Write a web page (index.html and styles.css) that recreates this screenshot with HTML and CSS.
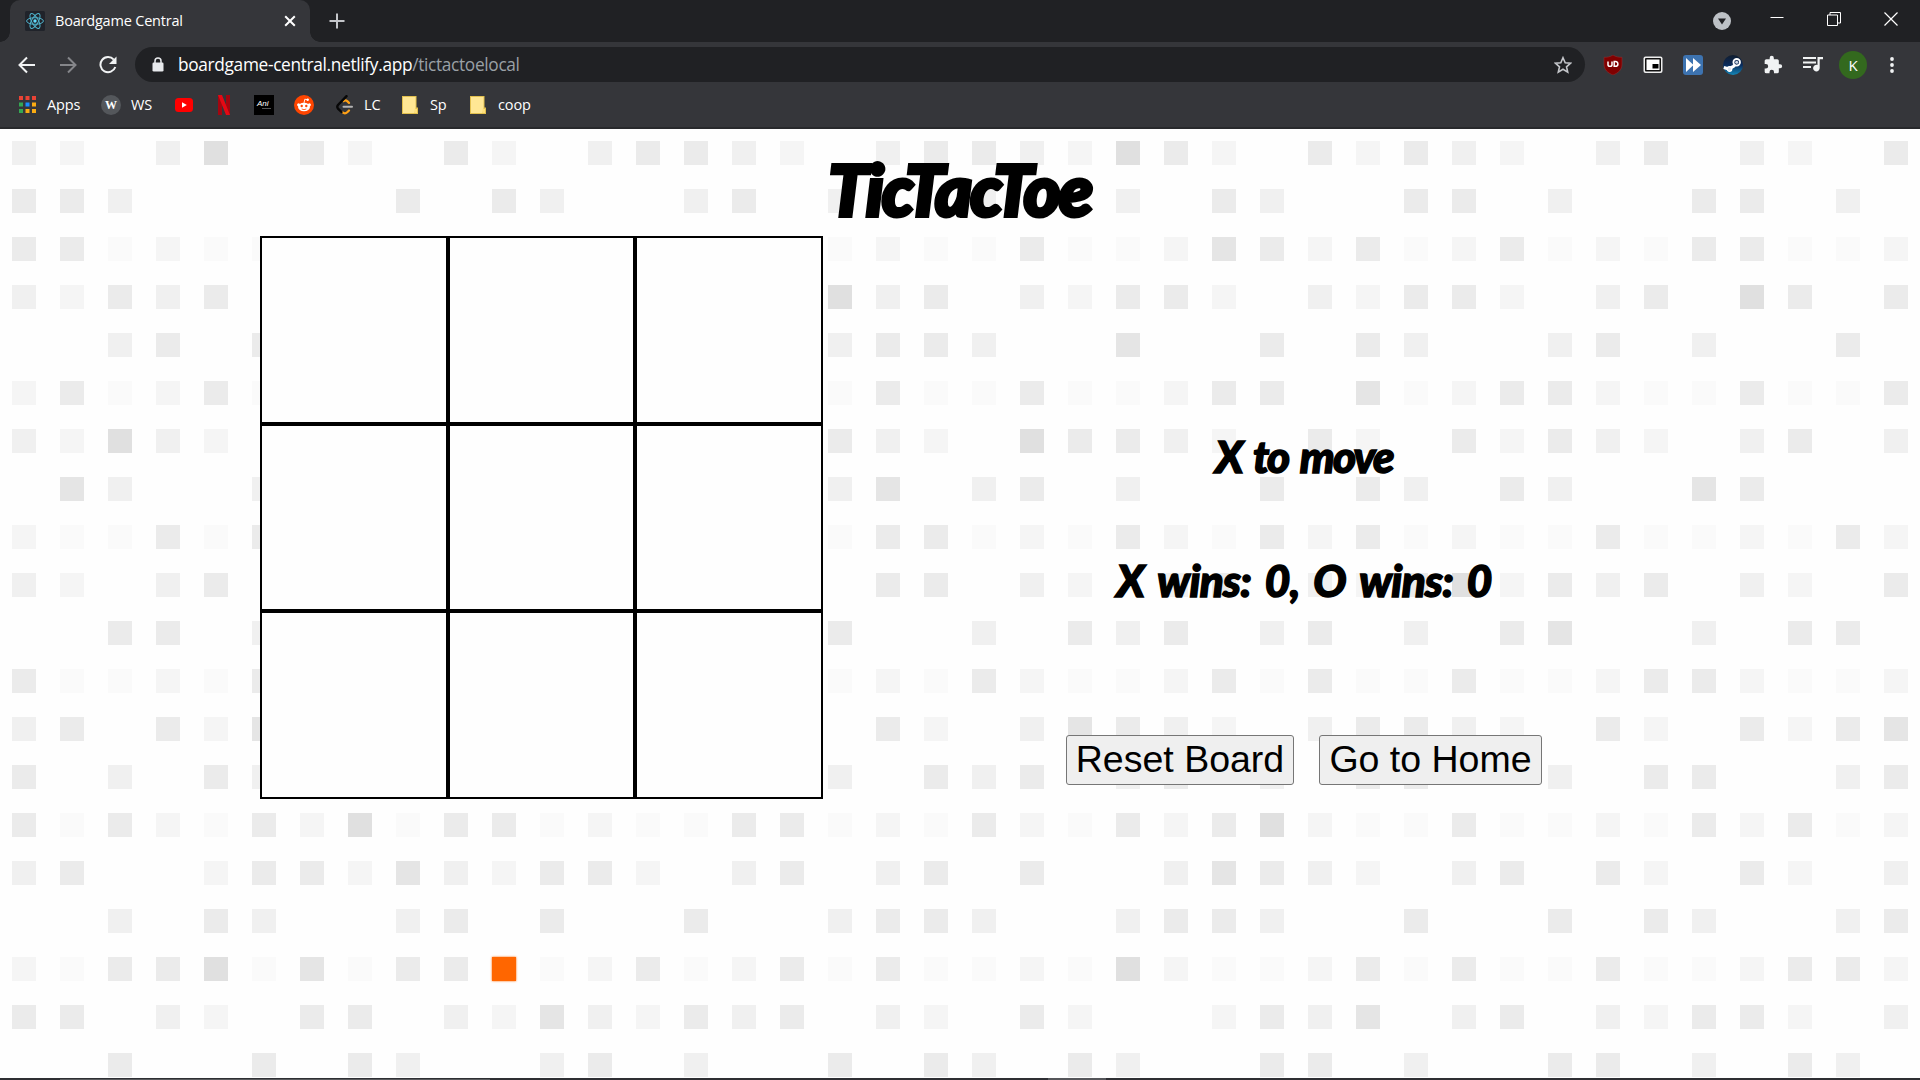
FILE: index.html
```html
<!DOCTYPE html>
<html lang="en">
<head>
<meta charset="utf-8">
<title>Boardgame Central</title>
<link rel="stylesheet" href="styles.css">
</head>
<body>
<header class="chrome">
  <div class="tabstrip">
    <div class="tab">
      <svg class="favicon" viewBox="0 0 20 20"><rect width="20" height="20" rx="1.5" fill="#20232a"/><g fill="none" stroke="#4fb3cc" stroke-width="1"><ellipse cx="10" cy="10" rx="8.4" ry="3.3"/><ellipse cx="10" cy="10" rx="8.4" ry="3.3" transform="rotate(60 10 10)"/><ellipse cx="10" cy="10" rx="8.4" ry="3.3" transform="rotate(120 10 10)"/></g><circle cx="10" cy="10" r="1.7" fill="#61dafb"/></svg>
      <span class="tab-title">Boardgame Central</span>
      <svg class="tab-close" viewBox="0 0 12 12"><path d="M1.2 1.2l9.6 9.6M10.800 1.2l-9.6 9.6" stroke="#fff" stroke-width="2"/></svg>
    </div>
    <svg class="new-tab" viewBox="0 0 16 16"><path d="M8 .5v15M.5 8h15" stroke="#c4c6ca" stroke-width="2"/></svg>
    <div class="window-controls">
      <svg class="search-tabs" viewBox="0 0 18 18"><circle cx="9" cy="9" r="9" fill="#bdc1c6"/><path d="M5 6.5h8L9 12.500z" fill="#202124"/></svg>
      <svg class="wc minimize" viewBox="0 0 14 14"><path d="M.5 6.500h13" stroke="#fff"/></svg>
      <svg class="wc" viewBox="0 0 14 14"><path d="M.5 3h10v10.500H.5zM3 3V.5h10.500v10.500h-3" fill="none" stroke="#fff"/></svg>
      <svg class="wc" viewBox="0 0 14 14"><path d="M.5.5l13 13M13.500.5l-13 13" stroke="#fff" stroke-width="1.200"/></svg>
    </div>
  </div>
  <div class="toolbar">
    <svg class="nav back" viewBox="0 0 18 18"><path d="M17 9H2M9 1.500L1.500 9 9 16.500" fill="none" stroke="#f1f3f4" stroke-width="2"/></svg>
    <svg class="nav forward" viewBox="0 0 18 18"><path d="M1 9h15M9 1.500L16.500 9 9 16.500" fill="none" stroke="#85868a" stroke-width="2"/></svg>
    <svg class="nav reload" viewBox="0 0 18 18"><path d="M14.800 3.600A7.600 7.600 0 1 0 16.300 11" fill="none" stroke="#f1f3f4" stroke-width="2"/><path d="M17.500.5v7.500H10z" fill="#f1f3f4"/></svg>
    <div class="omnibox">
      <svg class="lock" viewBox="0 0 12 15"><path d="M3 6V4a3 3 0 0 1 6 0v2" fill="none" stroke="#e8eaed" stroke-width="1.500"/><rect x=".5" y="5.500" width="11" height="9" rx="1.300" fill="#e8eaed"/></svg>
      <span class="url">boardgame-central.netlify.app<span class="path">/tictactoelocal</span></span>
      <svg class="star" viewBox="0 0 18 18"><path d="M9 1.700l2.200 5 5.400.5-4.100 3.600 1.200 5.300L9 13.300l-4.700 2.800 1.200-5.300L1.400 7.200l5.400-.5z" fill="none" stroke="#c4c6ca" stroke-width="1.600"/></svg>
    </div>
    <div class="extensions">
      <svg viewBox="0 0 20 20"><path d="M10 0c3 2 6 2.400 9 2.300V9c0 6-4 9-9 11C5 18 1 15 1 9V2.300C4 2.400 7 2 10 0z" fill="#800000" stroke="#9a3030" stroke-width=".5"/><path d="M5 6.500v3.200c0 2.200 4 2.200 4 0V6.500m2.200 0v4.800h1.300c3.200 0 3.200-4.800 0-4.800z" fill="none" stroke="#fff" stroke-width="1.500"/></svg>
      <svg viewBox="0 0 20 20"><rect x=".5" y="1.500" width="19" height="16.500" rx="2" fill="#eee"/><rect x="2" y="3" width="16" height="13.500" rx="1" fill="#111"/><rect x="3.500" y="4.500" width="13" height="10.500" fill="#fff"/><rect x="9.500" y="9" width="6" height="4.500" fill="#000"/></svg>
      <svg viewBox="0 0 20 20"><rect width="20" height="20" rx="3" fill="#3d73b0"/><path d="M3 3l7.500 7L3 17zM10 3l8 7-8 7z" fill="#fff"/></svg>
      <svg viewBox="0 0 20 20"><defs><linearGradient id="steam" x2="0" y2="1"><stop offset="0" stop-color="#111d2e"/><stop offset=".5" stop-color="#0a2b5c"/><stop offset="1" stop-color="#1387b8"/></linearGradient></defs><circle cx="10" cy="10" r="10" fill="url(#steam)"/><path d="M.8 12.500l5 1.500 5-3 3-4" fill="none" stroke="#fff" stroke-width="3.200"/><circle cx="6.500" cy="14" r="2.300" fill="#dfe6ee" stroke="#fff" stroke-width="1.200"/><circle cx="13.700" cy="7.300" r="3.300" fill="#0a2650" stroke="#fff" stroke-width="1.800"/><circle cx="13.700" cy="7.300" r="1.500" fill="#cfd8e6"/></svg>
      <svg viewBox="0 0 24 24"><path d="M20.500 11H19V7a2 2 0 0 0-2-2h-4V3.500a2.500 2.500 0 0 0-5 0V5H4a2 2 0 0 0-2 2v3.800h1.500a2.700 2.700 0 0 1 0 5.400H2V20a2 2 0 0 0 2 2h3.800v-1.500a2.700 2.700 0 0 1 5.400 0V22H17a2 2 0 0 0 2-2v-4h1.500a2.500 2.500 0 0 0 0-5z" fill="#f1f3f4"/></svg>
      <svg viewBox="0 0 20 20"><path d="M0 3h13M0 7.500h13M0 12h8" stroke="#f1f3f4" stroke-width="2"/><path d="M14.500 2H20v2.200h-3.300v8.800a3.300 3.300 0 1 1-2.200-3z" fill="#f1f3f4"/></svg>
      <span class="avatar">K</span>
      <svg class="menu" viewBox="0 0 6 18"><circle cx="3" cy="3" r="1.900" fill="#f1f3f4"/><circle cx="3" cy="9" r="1.900" fill="#f1f3f4"/><circle cx="3" cy="15" r="1.900" fill="#f1f3f4"/></svg>
    </div>
  </div>
  <nav class="bookmarks">
    <svg class="apps" viewBox="0 0 17 17"><path d="M0 0h4v4H0zM6.500 0h4v4h-4zM13 0h4v4h-4z" fill="#ea4335"/><path d="M0 6.500h4v4H0zM0 13h4v4H0z" fill="#34a853"/><path d="M6.500 6.500h4v4h-4z" fill="#1a8cff"/><path d="M13 6.500h4v4h-4zM6.500 13h4v4h-4zM13 13h4v4h-4z" fill="#fbac12"/></svg>
    <span class="bm-apps">Apps</span>
    <span class="wiki">W</span>
    <span class="bm-ws">WS</span>
    <svg class="youtube" viewBox="0 0 18 14"><rect width="18" height="14" rx="3.500" fill="#f00"/><path d="M7 4.200v5.600L11.800 7z" fill="#fff"/></svg>
    <svg class="netflix" viewBox="0 0 12 20"><path d="M0 0h4v20H0zM8 0h4v20H8z" fill="#a30610"/><path d="M0 0h4l8 20H8z" fill="#e50914"/></svg>
    <span class="ani">Ani<i></i></span>
    <svg class="reddit" viewBox="0 0 20 20"><circle cx="10" cy="10" r="10" fill="#ff4500"/><g fill="#fff"><ellipse cx="10" cy="12" rx="6" ry="4.200"/><circle cx="4.600" cy="9.800" r="1.500"/><circle cx="15.400" cy="9.800" r="1.500"/><circle cx="13.700" cy="4.700" r="1.200"/></g><path d="M10 8l.8-3.800 3 .6" fill="none" stroke="#fff" stroke-width=".9"/><circle cx="7.700" cy="11" r="1.200" fill="#ff4500"/><circle cx="12.300" cy="11" r="1.200" fill="#ff4500"/><path d="M7.700 14q2.300 1.300 4.600 0" fill="none" stroke="#ff4500" stroke-width=".8"/></svg>
    <svg class="leetcode" viewBox="0 0 17 20"><path d="M7.500 6.200q2-1.600 4 .2l1.500 1.500M13 15.500l-1.500 1.500q-2.500 2.500-5 .2" fill="none" stroke="#ffa116" stroke-width="2.200" stroke-linecap="round"/><path d="M10.500 1.200L2 10q-1.400 1.800 0 3.600L5.500 17" fill="none" stroke="#070707" stroke-width="2.400" stroke-linecap="round"/><path d="M7.500 11.800H16" stroke="#b3b3b3" stroke-width="2" stroke-linecap="round"/></svg>
    <span class="bm-lc">LC</span>
    <svg class="folder" viewBox="0 0 16 18"><path d="M0 0h14.500v11.500H16V18H0z" fill="#e2c04e"/><path d="M1 1h12.500v11l-1 5H1z" fill="#ffe794"/><path d="M12.500 13H15v4h-2.500z" fill="#ffe07a"/></svg>
    <span class="bm-sp">Sp</span>
    <svg class="folder" viewBox="0 0 16 18"><path d="M0 0h14.500v11.500H16V18H0z" fill="#e2c04e"/><path d="M1 1h12.500v11l-1 5H1z" fill="#ffe794"/><path d="M12.500 13H15v4h-2.500z" fill="#ffe07a"/></svg>
    <span class="bm-coop">coop</span>
  </nav>
</header>
<main class="page">
  <div class="squares" id="squares"></div>
  <div class="game">
    <h1 class="title">TicTacToe</h1>
    <div class="columns">
      <div class="board">
        <div class="cell"></div><div class="cell"></div><div class="cell"></div>
        <div class="cell"></div><div class="cell"></div><div class="cell"></div>
        <div class="cell"></div><div class="cell"></div><div class="cell"></div>
      </div>
      <section class="info">
        <h2 class="status">X to move</h2>
        <h2 class="score">X wins: 0, O wins: 0</h2>
        <div class="actions">
          <button class="reset">Reset Board</button>
          <button class="home">Go to Home</button>
        </div>
      </section>
    </div>
  </div>
</main>
<footer class="taskbar"><span class="search"></span><span class="active"></span></footer>
<script src="squares.js"></script>
</body>
</html>
```
FILE: styles.css
```css
* { box-sizing: border-box; }
body {
  margin: 0;
  height: 1080px;
  overflow: hidden;
  display: flex;
  flex-direction: column;
  background: #fff;
  font-family: "Open Sans", "Noto Sans", sans-serif;
}
svg { display: block; flex: none; }

/* browser frame */
.chrome {
  height: 129px;
  flex: none;
  background: #35363a;
  border-bottom: 2px solid #28292c;
  color: #fff;
}
.tabstrip {
  height: 42px;
  display: flex;
  align-items: center;
  background: #202124;
  padding-left: 10px;
}
.tab {
  position: relative;
  width: 300px;
  height: 42px;
  display: flex;
  align-items: center;
  padding: 0 14px 0 15px;
  background: #35363a;
  border-radius: 10px 10px 0 0;
}
.tab::before, .tab::after {
  content: "";
  position: absolute;
  bottom: 0;
  width: 10px;
  height: 10px;
}
.tab::before { left: -10px; background: radial-gradient(circle at 0 0, #202124 9.5px, #35363a 10px); }
.tab::after { right: -10px; background: radial-gradient(circle at 100% 0, #202124 9.5px, #35363a 10px); }
.favicon { width: 20px; height: 20px; }
.tab-title { margin: -2px 0 0 10px; font-size: 14.5px; letter-spacing: -0.2px; flex: 1; white-space: nowrap; }
.tab-close { width: 12px; height: 12px; }
.new-tab { width: 16px; height: 16px; margin-left: 19px; }
.window-controls { margin-left: auto; display: flex; align-items: center; padding-right: 22px; }
.search-tabs { width: 18px; height: 18px; margin-right: 39px; }
.wc { width: 14px; height: 14px; margin-left: 43px; margin-top: -5px; }
.wc.minimize { margin-left: 0; margin-top: -7px; }

.toolbar { height: 45px; display: flex; align-items: center; padding-left: 18px; }
.nav { width: 18px; height: 18px; }
.back { margin-right: 23px; }
.forward { margin-right: 22px; }
.omnibox {
  width: 1450px;
  height: 35px;
  margin-left: 18px;
  padding: 0 13px 0 17px;
  border-radius: 18px;
  background: #202124;
  display: flex;
  align-items: center;
}
.lock { width: 12px; height: 15px; }
.url { margin-left: 14px; flex: 1; font-size: 17.3px; letter-spacing: -0.33px; white-space: nowrap; }
.path { color: #9aa0a6; }
.star { width: 18px; height: 18px; }
.extensions { display: flex; align-items: center; gap: 20px; margin-left: 18px; }
.extensions svg { width: 20px; height: 20px; }
.extensions .menu { width: 6px; height: 18px; margin-left: 2px; }
.avatar {
  width: 28px;
  height: 28px;
  margin-left: -4px;
  border-radius: 50%;
  background: #33691e;
  font: 15px/28px "Open Sans", sans-serif;
  text-align: center;
}

.bookmarks { height: 35px; display: flex; align-items: center; padding-left: 19px; font-size: 14.5px; white-space: nowrap; }
.bookmarks > span:not(.wiki):not(.ani) { letter-spacing: -0.1px; }
.apps { width: 17px; height: 17px; }
.bm-apps { width: 54px; margin-left: 11px; }
.wiki { width: 20px; height: 20px; border-radius: 50%; background: #54575b; font: bold 12px/20px "Liberation Serif", serif; text-align: center; }
.bm-ws { width: 44px; margin-left: 10px; }
.youtube { width: 18px; height: 14px; }
.netflix { width: 12px; height: 20px; margin-left: 25px; }
.ani { width: 20px; height: 20px; margin-left: 24px; background: #000; font: italic 8px/17px "Liberation Sans", sans-serif; padding-left: 3px; }
.ani i { display: block; width: 9px; height: 1px; margin: -4px 0 0 5px; background: #555; }
.reddit { width: 20px; height: 20px; margin-left: 20px; }
.leetcode { width: 17px; height: 20px; margin-left: 22px; }
.bm-lc { width: 38px; margin-left: 11px; }
.folder { width: 16px; height: 18px; }
.bm-sp { width: 40px; margin-left: 12px; }
.bm-coop { margin-left: 12px; }

/* page */
.page { position: relative; height: 949px; flex: none; background: #fefefe; overflow: hidden; }
.squares {
  position: absolute;
  inset: 0;
  display: grid;
  grid-template-columns: repeat(40, 24px);
  grid-auto-rows: 24px;
  gap: 24px;
  padding: 12px;
}
.a { background: #fafafa; }
.b { background: #f5f5f5; }
.c { background: #f0f0f0; }
.d { background: #ebebeb; }
.e { background: #e5e5e5; }
.f { background: #e0e0e0; }
.hot { background: #f60; box-shadow: 0 0 2px #f60; }

.game { position: relative; color: #000; }
.title, .status, .score {
  margin: 0;
  font-family: Lato, sans-serif;
  font-weight: 900;
  font-style: italic;
  text-align: center;
  white-space: nowrap;
  -webkit-text-stroke: 1.5px #000;
}
.title { height: 107px; font-size: 70px; line-height: 120px; letter-spacing: -1.7px; -webkit-text-stroke-width: 4px; }
.columns { display: flex; padding-left: 260px; }
.board {
  width: 563px;
  height: 563px;
  display: grid;
  grid-template: repeat(3, 1fr) / repeat(3, 1fr);
  background: #fefefe;
}
.cell { border: 2px solid #000; }
.info { width: 962px; display: flex; flex-direction: column; align-items: center; }
.status { margin-top: 190px; font-size: 44px; line-height: 60px; letter-spacing: -1.8px; word-spacing: 4px; }
.score { margin-top: 64px; font-size: 44px; line-height: 60px; letter-spacing: -0.7px; word-spacing: 5px; }
.actions { display: flex; gap: 25px; margin-top: 125px; }
.actions button {
  height: 50px;
  padding: 0 0 2px;
  border: 1px solid #767676;
  border-radius: 3px;
  background: #efefef;
  color: #000;
  font: 37.500px "Liberation Sans", Arial, sans-serif;
  white-space: nowrap;
}
.reset { width: 228px; }
.home { width: 223px; }

.taskbar { height: 2px; flex: none; display: flex; background: #2e2f33; }
.search { width: 430px; margin-left: 60px; border-bottom: 1px solid #5a5b5e; }
.active { width: 58px; margin-left: 558px; background: #55565a; }
```
FILE: squares.js
```js
// One letter per square: a is the lightest grey, f the darkest, * the hovered one.
const rows = [
  "cb.cf.db.db.cddcb.cddcbfdb.dbdcb.cd.cb.d",
  "ddc.....d.dc..cd.c..c..c.dc..dd.c..dd.c.",
  "ddabaa...........abaadaabedbdabdabaddaab",
  "cbdcd............fcd.cbddb.cbddb.cd.fd.d",
  "..cd.d...........cddc..e..d.dc..cd.c..d.",
  "bdabda...........adaadaabdd.eabddbaadaad",
  "cbfcb............dcb.fddcb.db.dbdcb.cd.c",
  ".ec..c...........ce.cd.c..d.dc.dc..ed...",
  "baadad...........addabadbadbdabaadaabadb",
  "cb.cd.............dd.cb.cd.cbdfbdcd.cb.d",
  "..dd.c...........d..c.dcd.cd.c.de..c.dd.",
  "daabad...........abadbaabdadaadaabddbaab",
  "cd.dbe............db.cedcb.cddcb.db.dbde",
  "d.c.dc...........c.dcd.cd.c.dd..c.dd..cd",
  "dadbadbfaddabaaddabadbadbdfbaadaabadbdab",
  "cd..bddbecbddb.cd.cd.d..cedcb.cd.db.db.c",
  "..c.dc..cd.d..d..cddc..cddc..d..d.dc..cd",
  "baddfaeadd*abdabdadaabafbaabdadaadaabddb",
  "dd.cb.dd.cbecbdcd.cb.db..bdce.cd.cbddb.c",
  "..d..d.dc..cd.c..d.dc.dc..dd.c..dd.c.dc."
];
const layer = document.getElementById("squares");
for (const row of rows) {
  for (const level of row) {
    const square = document.createElement("span");
    if (level === "*") square.className = "hot";
    else if (level !== ".") square.className = level;
    layer.append(square);
  }
}
```
